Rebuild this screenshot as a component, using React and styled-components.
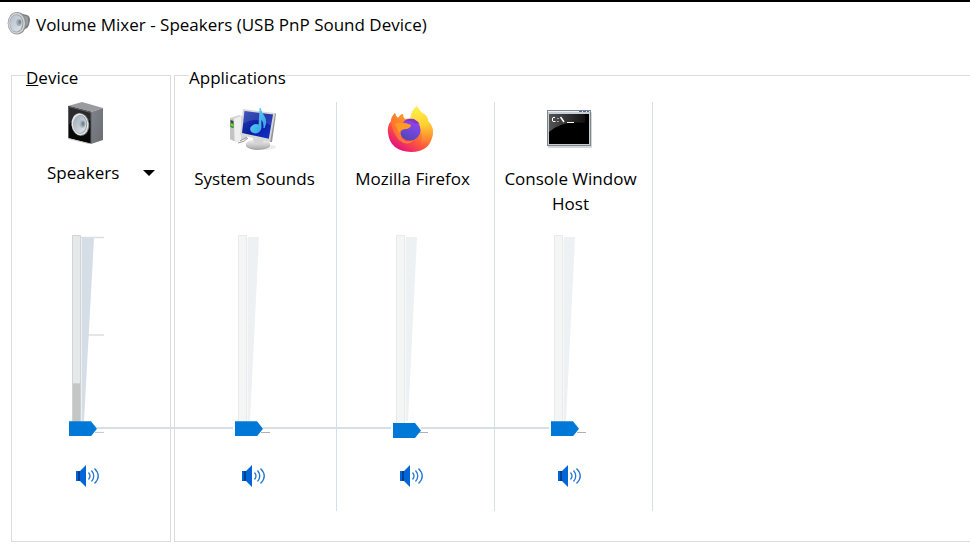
import { useState } from "react";
import styled, { createGlobalStyle } from "styled-components";

const GlobalStyle = createGlobalStyle`
  * {
    box-sizing: border-box;
  }

  body {
    margin: 0;
    background: #ffffff;
    color: #000000;
    font-family: "Open Sans", "Noto Sans", sans-serif;
    font-size: 17px;
    line-height: 25px;
  }
`;

const Window = styled.main`
  border-top: 2px solid #000000;
  overflow: hidden;
`;

const TitleBar = styled.header`
  display: flex;
  align-items: center;
  gap: 5px;
  height: 44px;
  padding-left: 7px;
`;

const Title = styled.h1`
  margin: 0;
  font-size: 17px;
  font-weight: 400;
`;

const Panels = styled.div`
  display: flex;
  gap: 3px;
  padding: 14px 0 16px 11px;
`;

const Panel = styled.fieldset`
  flex: ${(props) => (props.$grow ? "1" : "0 0 160px")};
  min-width: 0;
  margin: 0;
  padding: 0;
  border: 1px solid #dcdcdc;
  border-right-width: ${(props) => (props.$grow ? "0" : "1px")};
`;

const Legend = styled.legend`
  margin-left: 14px;
  padding: 6px 0 0;
  line-height: 24px;
`;

const PanelBody = styled.div`
  display: flex;
  padding: 12px 0 30px ${(props) => props.$indent}px;
`;

const Column = styled.section`
  display: flex;
  flex-direction: column;
  flex: 0 0 158px;
  padding-bottom: 22px;
  border-right: ${(props) => (props.$divider ? "1px solid #d5dfe7" : "none")};
`;

const Heading = styled.div`
  display: flex;
  flex-direction: column;
  align-items: ${(props) => (props.$device ? "flex-start" : "center")};
  gap: ${(props) => (props.$device ? "10px" : "12px")};
  height: 133px;
  padding: ${(props) => (props.$device ? "0 0 0 34px" : "4px 6px 0 0")};
`;

const Picture = styled.div`
  height: 48px;
  padding: ${(props) => (props.$device ? "0 0 0 20px" : "0 3px 0 0")};

  svg {
    display: block;
  }
`;

const AppName = styled.label`
  text-align: center;
`;

const DeviceButton = styled.button`
  display: flex;
  align-items: center;
  gap: 24px;
  padding: 0;
  border: 0;
  background: none;
  color: inherit;
  font: inherit;
`;

const Arrow = styled.span`
  border: 6px solid transparent;
  border-top-color: #000000;
  border-bottom: 0;
`;

const SliderBox = styled.div`
  position: relative;
  width: 36px;
  height: 203px;
  margin-left: 56px;
`;

const Scale = styled.svg`
  display: block;
`;

// joins this thumb to the one in the next column
const Link = styled.div`
  position: absolute;
  top: 192px;
  left: 28px;
  width: ${(props) => props.$length}px;
  height: 2px;
  background: #d5dfe7;
`;

const Range = styled.input`
  position: absolute;
  top: 0;
  left: 0;
  width: 28px;
  height: 203px;
  margin: 0;
  appearance: none;
  background: transparent;
  writing-mode: vertical-lr;
  direction: rtl;

  &::-webkit-slider-thumb {
    appearance: none;
    width: 28px;
    height: 15px;
    background: #0078d7;
    clip-path: polygon(0 0, 22px 0, 28px 50%, 22px 100%, 0 100%);
  }
`;

const MuteButton = styled.button`
  width: 26px;
  height: 26px;
  margin: 25px 0 0 62px;
  padding: 0;
  border: 0;
  background: none;

  svg {
    display: block;
  }
`;

function TitleIcon() {
  return (
    <svg width="24" height="26" viewBox="0 0 24 26">
      <defs>
        <linearGradient id="titleCone" x1="0" y1="0" x2="1" y2="1">
          <stop offset="0" stopColor="#b4bfca" />
          <stop offset="1" stopColor="#dfe5eb" />
        </linearGradient>
      </defs>
      <path d="M12 2 L20 4 Q23 5 23 9 L22 14 Q21 17 18 18 L12 23Z" fill="#777b7e" />
      <path d="M16 4 L21 6 V13 L17 17Z" fill="#989da0" />
      <ellipse cx="10" cy="12.3" rx="9.3" ry="11.3" fill="#8c9093" />
      <ellipse cx="9.6" cy="12.3" rx="8.4" ry="10.5" fill="#d4d6d7" />
      <ellipse cx="9.5" cy="12.3" rx="6.9" ry="9.1" fill="#949ba1" />
      <ellipse cx="9.2" cy="12.3" rx="6.2" ry="8.4" fill="url(#titleCone)" />
      <ellipse cx="12" cy="11.4" rx="2.7" ry="3.5" fill="#a3adb7" />
      <ellipse cx="12.7" cy="11" rx="1.4" ry="2" fill="#7d8790" />
    </svg>
  );
}

function SpeakerBoxIcon() {
  return (
    <svg width="38" height="42" viewBox="0 0 38 42">
      <defs>
        <linearGradient id="boxSide" x1="0" y1="0" x2="1" y2="1">
          <stop offset="0" stopColor="#80838a" />
          <stop offset="1" stopColor="#6a6d75" />
        </linearGradient>
        <linearGradient id="boxCone" x1="0" y1="0" x2="1" y2="1">
          <stop offset="0" stopColor="#9ca9b5" />
          <stop offset="1" stopColor="#e2e9ef" />
        </linearGradient>
      </defs>
      <path d="M1 4 L15 0 L36 6 L24 10Z" fill="#999b9f" />
      <path d="M24 10 L36 6 V38 L24 42Z" fill="url(#boxSide)" />
      <path d="M1 4 L24 10 V42 L1 36Z" fill="#080808" />
      <path d="M1 4 L24 10 L24 19 Q10 12 1 24Z" fill="#2b2b2d" />
      <path d="M1.5 36 V4.5 L24 10.5 V41" fill="none" stroke="#5f6167" />
      <path d="M1 36.5 L24 42" stroke="#c9c9c9" />
      <ellipse cx="13.3" cy="22.5" rx="9" ry="11.5" fill="#777c81" transform="rotate(-7 13 22)" />
      <ellipse cx="13" cy="22.3" rx="8.4" ry="10.9" fill="#e4e6e7" transform="rotate(-7 13 22)" />
      <ellipse cx="13.2" cy="22.3" rx="6.9" ry="9.4" fill="#8f989f" />
      <ellipse cx="12.8" cy="22.3" rx="6.4" ry="8.8" fill="url(#boxCone)" />
      <ellipse cx="15.5" cy="22" rx="2.9" ry="3.7" fill="#a5b1bc" />
      <ellipse cx="16" cy="21.7" rx="1.5" ry="2.2" fill="#77828c" />
    </svg>
  );
}

function SystemSoundsIcon() {
  return (
    <svg width="48" height="48" viewBox="0 0 48 48">
      <defs>
        <linearGradient id="screen" x1="0" y1="0" x2="1" y2="1">
          <stop offset="0" stopColor="#2740b4" />
          <stop offset="0.5" stopColor="#0a1e9e" />
          <stop offset="1" stopColor="#1635cc" />
        </linearGradient>
        <linearGradient id="note" x1="0" y1="0" x2="1" y2="1">
          <stop offset="0" stopColor="#7bd8fb" />
          <stop offset="1" stopColor="#219be3" />
        </linearGradient>
        <linearGradient id="stand" x1="0" y1="0" x2="0" y2="1">
          <stop offset="0" stopColor="#f5f5f5" />
          <stop offset="1" stopColor="#b0b0b0" />
        </linearGradient>
      </defs>
      <path d="M1 12 L10 9 L18 12 V33 L7 36 L1 33Z" fill="#d6d6d6" />
      <path d="M1 12 L5 13 V35 L1 33Z" fill="#c4c4c4" />
      <path d="M5 13 L12 10 V35 L6 36Z" fill="#efefef" />
      <path d="M1.5 14 L4.5 15 V22 L1.5 21Z" fill="#3c4a44" />
      <path d="M1.5 17 L4.5 18 V21 L1.5 20Z" fill="#58e024" />
      <path d="M11 35 L18 31 M9 37 Q16 36 19 32" fill="none" stroke="#999" />
      <ellipse cx="34" cy="41" rx="13" ry="3" fill="#ececec" />
      <path d="M24 33 L36 36 L35 40 H25Z" fill="#c2c2c2" />
      <ellipse cx="29" cy="39" rx="12" ry="5" fill="#a9a9a9" />
      <ellipse cx="29" cy="38" rx="12" ry="4.7" fill="url(#stand)" />
      <path d="M24 32 L35 34 L33 38 Q28 40 25 37Z" fill="#d4d4d4" />
      <path d="M14 3 L46 7 L41 36 L11 29Z" fill="#d8d8d6" />
      <path d="M46 7 L47 8 L43 36 L41 36Z" fill="#969696" />
      <path d="M15.5 5 L44 8.5 L39.8 32.8 L13 27Z" fill="url(#screen)" />
      <path d="M15.5 5 L44 8.5 L42 20 Q28 9 14 18Z" fill="#fff" opacity="0.12" />
      <path
        d="M31 2 Q33 7 36 12 Q38 17 35 22 Q35 15 32 13 V22 Q31 27 26 27 Q20 26 22 21 Q25 17 30 19Z"
        fill="url(#note)"
        stroke="#51c0f2"
        strokeWidth="0.7"
      />
    </svg>
  );
}

function FirefoxIcon() {
  return (
    <svg width="48" height="48" viewBox="0 0 48 48">
      <defs>
        <linearGradient id="foxBody" x1="0.85" y1="0.1" x2="0.25" y2="0.95">
          <stop offset="0" stopColor="#ffe23c" />
          <stop offset="0.35" stopColor="#ffa02b" />
          <stop offset="0.65" stopColor="#ff5a3a" />
          <stop offset="1" stopColor="#e5127e" />
        </linearGradient>
        <linearGradient id="foxTail" x1="0.4" y1="0" x2="0.5" y2="1">
          <stop offset="0" stopColor="#fff14c" />
          <stop offset="0.45" stopColor="#ffd133" />
          <stop offset="0.8" stopColor="#ff8c32" stopOpacity="0.7" />
          <stop offset="1" stopColor="#ff4050" stopOpacity="0" />
        </linearGradient>
        <linearGradient id="foxGlobe" x1="0.8" y1="0" x2="0.3" y2="1">
          <stop offset="0" stopColor="#a43be8" />
          <stop offset="0.45" stopColor="#7548df" />
          <stop offset="1" stopColor="#5144b5" />
        </linearGradient>
        <linearGradient id="foxHead" x1="0" y1="0" x2="1" y2="0.5">
          <stop offset="0" stopColor="#ff7a24" />
          <stop offset="1" stopColor="#ffae2b" />
        </linearGradient>
      </defs>
      <path
        d="M8 7 Q9 11 11 12 Q14 8 16 8 Q16 11 18 13 L24 12 Q24 5 30 0 Q32 5 37 8 Q41 11 41 15 Q46 20 46 27 Q44 46 24 46 Q3 45 1 27 Q0 20 4 15 Q4 11 8 7Z"
        fill="url(#foxBody)"
      />
      <path
        d="M30 0 Q32 5 37 8 Q41 11 41 15 Q46 20 46 27 Q44 40 31 43 Q37 35 34 25 Q32 18 23 13 Q24 5 30 0Z"
        fill="url(#foxTail)"
      />
      <circle cx="23" cy="24" r="10.5" fill="url(#foxGlobe)" />
      <path d="M17 15 Q21 12 27 13 Q31 15 33 19 Q30 16 28 18 Q25 14 17 15Z" fill="#8136cb" />
      <path
        d="M8 7 Q9 11 11 12 Q14 8 16 8 Q15 14 17 17 L24 19 Q23 22 19 23 Q15 23 14 26 Q13 31 17 34 Q21 37 27 34 Q20 41 12 34 Q5 26 4 15 Q4 11 8 7Z"
        fill="url(#foxHead)"
        opacity="0.6"
      />
      <path d="M8 18 Q16 15 24 19 Q23 23 18 23 Q14 23 12 27 Q10 22 8 18Z" fill="#ff9a26" />
    </svg>
  );
}

function ConsoleIcon() {
  return (
    <svg width="48" height="48" viewBox="0 0 48 48">
      <defs>
        <linearGradient id="consoleGlare" x1="0" y1="0" x2="1" y2="0">
          <stop offset="0" stopColor="#555555" />
          <stop offset="1" stopColor="#111111" />
        </linearGradient>
      </defs>
      <rect x="3" y="6" width="44" height="36" rx="1" fill="#d6d6d6" />
      <rect x="2.5" y="4.5" width="43" height="35" fill="#c6cdd4" stroke="#7f878d" />
      <path d="M3 5.5 H45" stroke="#edf1f5" />
      <path d="M34 5.5 h3 M38 5.5 h3 M42 5.5 h2" stroke="#4c63a5" />
      <rect x="4" y="8" width="40" height="30" fill="#000000" />
      <path d="M4 8 H40 V17 Q17 14 4 26Z" fill="url(#consoleGlare)" />
      <path d="M10 11.5 H8 L7.5 12 V15 L8 15.5 H10.5 M13 12 v1 M13 15 v1" fill="none" stroke="#fff" />
      <path d="M15.5 11 L19 16" stroke="#fff" strokeWidth="1.5" />
      <path d="M22 16.5 H29" stroke="#fff" />
    </svg>
  );
}

function VolumeIcon() {
  return (
    <svg width="26" height="26" viewBox="0 0 26 26">
      <path d="M1 8 H5 L11 2 V24 L5 18 H1Z" fill="#0066d6" />
      <path d="M3 8 h2 v10 h-2z" fill="#003f94" />
      <path
        d="M13.5 9.5 Q16.5 13 13.5 16.5 M16.5 7.5 Q21 13 16.5 18.5 M19.5 5.5 Q27 13 19.5 20.5"
        fill="none"
        stroke="#2478d2"
        strokeWidth="1.3"
      />
    </svg>
  );
}

function VolumeSlider({ id, name, start, device, link }) {
  const [value, setValue] = useState(start);

  return (
    <SliderBox>
      <Scale width="36" height="203" viewBox="0 0 36 203">
        {device && <path d="M12 2.5 H35 M12 100 H35" stroke="#d9e0e5" strokeWidth="1.5" />}
        <path
          d={device ? "M13 3 H25 L15 186 H13Z" : "M13 2 H24 L15 186 H13Z"}
          fill={device ? "#d5dee6" : "#edf1f4"}
        />
        <path d="M12.5 3 V186" stroke={device ? "#edf0f2" : "#f6f8f9"} />
        <path
          d="M3.5 190 V0.5 H11.5 V190"
          fill={device ? "#e6e9ea" : "#f4f6f6"}
          stroke={device ? "#d2d5d7" : "#e9ebeb"}
        />
        {device && (
          <path d="M3.5 190 V148.5 H11.5 V190" fill="#c4c6c6" stroke="#cfd0d0" />
        )}
        <path d="M26 197.5 H35" stroke={device ? "#cccccc" : "#b0b0b0"} />
      </Scale>
      {link && <Link $length={link} />}
      <Range
        id={id}
        type="range"
        min="0"
        max="100"
        value={value}
        aria-label={name}
        onChange={(e) => setValue(Number(e.target.value))}
      />
    </SliderBox>
  );
}

const apps = [
  { id: "system", name: "System Sounds", icon: <SystemSoundsIcon />, volume: 1, link: 128 },
  { id: "firefox", name: "Mozilla Firefox", icon: <FirefoxIcon />, volume: 0, link: 128 },
  { id: "console", name: "Console Window Host", icon: <ConsoleIcon />, volume: 1 },
];

function App() {
  return (
    <Window>
      <GlobalStyle />
      <TitleBar>
        <TitleIcon />
        <Title>Volume Mixer - Speakers (USB PnP Sound Device)</Title>
      </TitleBar>

      <Panels>
        <Panel>
          <Legend>
            <u>D</u>evice
          </Legend>
          <PanelBody $indent={1}>
            <Column>
              <Heading $device>
                <Picture $device>
                  <SpeakerBoxIcon />
                </Picture>
                <DeviceButton>
                  Speakers
                  <Arrow />
                </DeviceButton>
              </Heading>
              <VolumeSlider id="device" name="Speakers" start={1} link={136} device />
              <MuteButton aria-label="Mute Speakers">
                <VolumeIcon />
              </MuteButton>
            </Column>
          </PanelBody>
        </Panel>

        <Panel $grow>
          <Legend>Applications</Legend>
          <PanelBody $indent={4}>
            {apps.map((app) => (
              <Column key={app.id} $divider>
                <Heading>
                  <Picture>{app.icon}</Picture>
                  <AppName htmlFor={app.id}>{app.name}</AppName>
                </Heading>
                <VolumeSlider id={app.id} name={app.name} start={app.volume} link={app.link} />
                <MuteButton aria-label={`Mute ${app.name}`}>
                  <VolumeIcon />
                </MuteButton>
              </Column>
            ))}
          </PanelBody>
        </Panel>
      </Panels>
    </Window>
  );
}

export default App;
